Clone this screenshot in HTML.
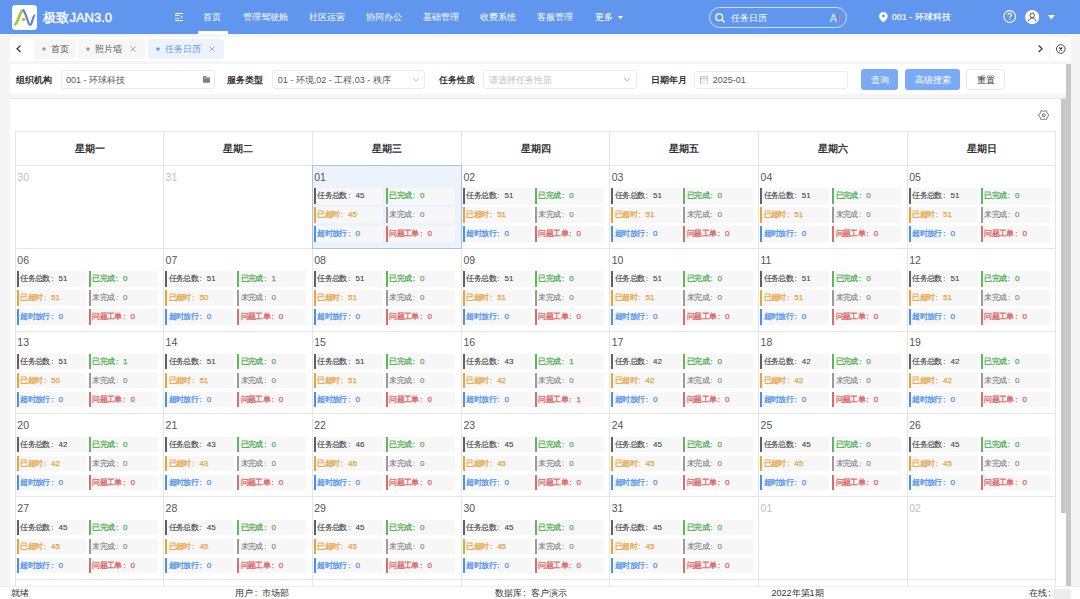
<!DOCTYPE html><html><head><meta charset="utf-8"><style>
*{box-sizing:border-box;margin:0;padding:0}
html,body{width:1080px;height:599px;overflow:hidden;background:#f5f5f5;font-family:"Liberation Sans",sans-serif;position:relative}
.a{position:absolute;white-space:nowrap}
#hdr{left:0;top:0;width:1080px;height:33.6px;background:#6096ee}
.nav{color:#fff;font-size:9px;line-height:10px;top:11.5px}
.panel{background:#fff}
.tab{top:39.2px;height:19.6px;border-radius:3.5px;background:#f6f6f6;font-size:9px;color:#555;line-height:21px}
.tab .dot{position:absolute;width:3.5px;height:3.5px;border-radius:50%;background:#999;top:8.3px}
.lbl{font-size:9px;font-weight:bold;color:#333;top:75px;line-height:10px}
.inp{top:70.4px;height:18.2px;border:1px solid #ebebeb;border-radius:3px;background:#fff;font-size:9px;color:#555;line-height:18px}
.btn{top:69.1px;height:20.6px;border-radius:3px;font-size:9px;line-height:22px;text-align:center}
table{position:absolute;left:15px;top:131px;border-collapse:collapse;table-layout:fixed}
td,th{border:1px solid #e5e5e5;vertical-align:top;position:relative}
th{height:34px;font-size:10px;font-weight:bold;color:#333;text-align:center;vertical-align:middle;padding-top:1px}
td{height:82.8px}
.dn{position:absolute;left:1.3px;top:4.8px;font-size:10.5px;color:#555;line-height:12px}
.dn.g{color:#c0c0c0}
.st{position:absolute;width:69.5px;height:15.4px;background:#f7f7f7;font-size:8px;line-height:15.4px;padding-left:3.6px;letter-spacing:-0.6px;-webkit-text-stroke:0.25px currentColor}
.st i{font-style:normal;display:inline-block;width:8.6px;padding-left:1.4px;letter-spacing:0}
.st b{font-weight:normal;font-size:8px;letter-spacing:0}
.st:before{content:"";position:absolute;left:0;top:0;width:2.2px;height:100%;background:currentColor}
.c0{color:#444;-webkit-text-stroke:0.12px #444}.c0:before{background:#606060}
.c1{color:#4fae4f}.c1:before{background:#5cb85c}
.c2{color:#e8a33d}.c2:before{background:#e8a33d}
.c3{color:#7d7d7d;-webkit-text-stroke:0.1px #7d7d7d}.c3 b{font-weight:normal}.c3:before{background:#9a9a9a}
.c4{color:#4a8ef0}.c4:before{background:#4a8ef0}
.c5{color:#dc5b5b}.c5:before{background:#dc6b6b}
.sel{background:#edf3fd}.sel:after{content:'';position:absolute;left:-1px;top:-1px;right:-0.5px;bottom:-1px;border:1px solid #a4c2f2}
.ft{top:587.8px;font-size:9px;color:#333;line-height:10px}
.cl{font-style:normal;display:inline-block;width:9px;padding-left:1.5px}
</style></head><body><div id="hdr" class="a"></div>
<div class="a" style="left:11.7px;top:5px;width:25.3px;height:25.3px;border-radius:3.5px;background:#fff"></div>
<svg class="a" style="left:11.7px;top:5px" width="25.3" height="25.3" viewBox="0 0 25.3 25.3">
<path d="M3.2 19.4 C5 17.8 6.2 14.5 7.5 10.5 C8.6 7.5 9.6 5.6 11.2 5.2" stroke="#a9c63a" stroke-width="2.7" fill="none" stroke-linecap="round"/>
<path d="M11.4 5.3 C13.2 7.2 14.8 13.5 16.4 17.6 C17.4 20.3 18.8 20.6 19.6 18.2 C20.3 16 20.8 12.4 22.3 10.6" stroke="#4f86db" stroke-width="2.1" fill="none" stroke-linecap="round"/>
<circle cx="11.6" cy="14.4" r="1.7" fill="#f0a02a"/>
</svg>
<div class="a" style="left:43.4px;top:11px;font-size:13px;line-height:14px;color:#fff;-webkit-text-stroke:0.35px #fff">极致JAN3.0</div>
<svg class="a" style="left:175px;top:12px" width="8.5" height="10" viewBox="0 0 8.5 10">
<rect x="0" y="1" width="8" height="1.05" fill="#fff"/><rect x="0" y="3" width="4.6" height="1" fill="#fff" opacity="0.9"/><rect x="0" y="5.9" width="4.6" height="1" fill="#fff" opacity="0.75"/><rect x="0" y="8" width="8" height="1.05" fill="#fff"/>
<ellipse cx="6.6" cy="4.9" rx="0.75" ry="1.15" fill="#fff"/></svg>
<div class="a nav" style="left:203.4px">首页</div>
<div class="a nav" style="left:242.5px">管理驾驶舱</div>
<div class="a nav" style="left:308.5px">社区运营</div>
<div class="a nav" style="left:366.1px">协同办公</div>
<div class="a nav" style="left:422.6px">基础管理</div>
<div class="a nav" style="left:480.20000000000005px">收费系统</div>
<div class="a nav" style="left:537.2px">客服管理</div>
<div class="a nav" style="left:595.0px">更多</div>
<svg class="a" style="left:618px;top:15.5px" width="5" height="3.4" viewBox="0 0 5 3.4"><path d="M0 0H5L2.5 3.4Z" fill="#fff"/></svg>
<div class="a" style="left:197.8px;top:31.1px;width:30px;height:2.5px;background:#fff"></div>
<div class="a" style="left:709.2px;top:7px;width:137.5px;height:20.5px;border:1px solid rgba(255,255,255,0.7);border-radius:10.5px"></div>
<svg class="a" style="left:715px;top:13px" width="10.5" height="9.5" viewBox="0 0 10.5 9.5"><circle cx="4.2" cy="4.2" r="3.4" stroke="#fff" stroke-width="1.2" fill="none"/><path d="M6.7 6.7 L9.3 9" stroke="#fff" stroke-width="1.3" stroke-linecap="round"/></svg>
<div class="a nav" style="left:731.4px;top:13.2px">任务日历</div>
<div class="a" style="left:829.8px;top:12.4px;font-size:11px;line-height:12px;color:#b0e4ff;-webkit-text-stroke:0.35px #b0e4ff">A<span style="color:#e2673f;-webkit-text-stroke:0.3px #e2673f;font-size:10px">i</span></div>
<svg class="a" style="left:879.4px;top:11.8px" width="8.7" height="10.5" viewBox="0 0 8.7 10.5"><path d="M4.35 0C2 0 0 1.9 0 4.2C0 6.8 4.35 10.5 4.35 10.5S8.7 6.8 8.7 4.2C8.7 1.9 6.7 0 4.35 0Z" fill="#fff"/><circle cx="4.35" cy="4.1" r="1.5" fill="#6096ee"/></svg>
<div class="a nav" style="left:891.8px;top:11.8px;-webkit-text-stroke:0.15px #fff">001 - 环球科技</div>
<svg class="a" style="left:1003px;top:10.3px" width="13.5" height="13" viewBox="0 0 13.5 13"><circle cx="6.7" cy="6.5" r="5.9" stroke="#fff" stroke-width="1.05" fill="none"/><path d="M4.9 5.1C4.9 3.9 5.7 3.3 6.7 3.3C7.7 3.3 8.5 4 8.5 4.9C8.5 6.1 6.8 6.2 6.8 7.7" stroke="#fff" stroke-width="1.05" fill="none"/><circle cx="6.8" cy="9.4" r="0.65" fill="#fff"/></svg>
<svg class="a" style="left:1025px;top:9.8px" width="14.4" height="14.2" viewBox="0 0 14.4 14.2"><circle cx="7.2" cy="7.1" r="7.1" fill="#fff"/><circle cx="7.2" cy="5.4" r="2.3" stroke="#444" stroke-width="0.9" fill="none"/><path d="M3.4 11.3C3.9 8.9 5.4 8 7.2 8C9 8 10.5 8.9 11 11.3" stroke="#444" stroke-width="0.9" fill="none"/></svg>
<svg class="a" style="left:1047.8px;top:15.3px" width="6.8" height="4.5" viewBox="0 0 6.8 4.5"><path d="M0 0H6.8L3.4 4.5Z" fill="#fff"/></svg>
<div class="a panel" style="left:10px;top:36.7px;width:1061px;height:24px"></div>
<svg class="a" style="left:16px;top:45.2px" width="5.5" height="7.5" viewBox="0 0 5.5 7.5"><path d="M4.6 0.5L1 3.75L4.6 7" stroke="#333" stroke-width="1.2" fill="none"/></svg>
<div class="a tab" style="left:34px;width:41.599999999999994px;background:#f6f6f6;color:#555"><svg style="position:absolute;left:7.6px;top:8px" width="4" height="4" viewBox="0 0 4 4"><circle cx="2" cy="2" r="1.75" fill="#999"/></svg><span style="position:absolute;left:16.5px">首页</span></div>
<div class="a tab" style="left:78.4px;width:66.5px;background:#f6f6f6;color:#555"><svg style="position:absolute;left:7.6px;top:8px" width="4" height="4" viewBox="0 0 4 4"><circle cx="2" cy="2" r="1.75" fill="#999"/></svg><span style="position:absolute;left:16.5px">照片墙</span><svg style="position:absolute;left:52.0px;top:7px" width="6" height="6" viewBox="0 0 6 6"><path d="M0.4 0.4L5.6 5.6M5.6 0.4L0.4 5.6" stroke="#9a9a9a" stroke-width="0.75"/></svg></div>
<div class="a tab" style="left:148.2px;width:75.60000000000002px;background:#ecf3fd;color:#5f95ee"><svg style="position:absolute;left:7.6px;top:8px" width="4" height="4" viewBox="0 0 4 4"><circle cx="2" cy="2" r="1.75" fill="#5f95ee"/></svg><span style="position:absolute;left:16.5px">任务日历</span><svg style="position:absolute;left:61.10000000000002px;top:7px" width="6" height="6" viewBox="0 0 6 6"><path d="M0.4 0.4L5.6 5.6M5.6 0.4L0.4 5.6" stroke="#9a9a9a" stroke-width="0.75"/></svg></div>
<div class="a" style="left:1049.3px;top:37px;width:0.8px;height:23.5px;background:#f2f2f2"></div>
<svg class="a" style="left:1037.6px;top:45px" width="5" height="7.5" viewBox="0 0 5 7.5"><path d="M0.6 0.5L4.2 3.75L0.6 7" stroke="#333" stroke-width="1.2" fill="none"/></svg>
<svg class="a" style="left:1055.5px;top:43.8px" width="10" height="10" viewBox="0 0 10 10"><circle cx="4.8" cy="5" r="4.3" stroke="#333" stroke-width="0.9" fill="none"/><path d="M3.3 3.5L6.3 6.5M6.3 3.5L3.3 6.5" stroke="#333" stroke-width="1.15"/></svg>
<div class="a panel" style="left:10px;top:64.1px;width:1056px;height:30.3px"></div>
<div class="a lbl" style="left:15.8px">组织机构</div>
<div class="a inp" style="left:60.5px;width:154px;padding-left:4.5px">001 - 环球科技</div>
<svg class="a" style="left:202.7px;top:76px" width="7.8" height="6.7" viewBox="0 0 7.8 6.7"><path d="M0 0.6Q0 0 0.6 0H2.8L3.5 0.9H7.2Q7.8 0.9 7.8 1.5V6.1Q7.8 6.7 7.2 6.7H0.6Q0 6.7 0 6.1Z" fill="#7c7c90"/><rect x="0.5" y="1.7" width="6.8" height="0.5" fill="#fff"/></svg>
<div class="a lbl" style="left:227px">服务类型</div>
<div class="a inp" style="left:272.2px;width:153px;padding-left:4.5px">01 - 环境,02 - 工程,03 - 秩序</div>
<svg class="a" style="left:413.2px;top:78.2px" width="6" height="3.6" viewBox="0 0 6 3.6"><path d="M0.3 0.3L3 3.1L5.7 0.3" stroke="#aaa" stroke-width="0.8" fill="none"/></svg>
<div class="a lbl" style="left:438.6px">任务性质</div>
<div class="a inp" style="left:483.3px;width:153.5px;padding-left:4.5px;color:#c0c0c0">请选择任务性质</div>
<svg class="a" style="left:624px;top:78.2px" width="6" height="3.6" viewBox="0 0 6 3.6"><path d="M0.3 0.3L3 3.1L5.7 0.3" stroke="#aaa" stroke-width="0.8" fill="none"/></svg>
<div class="a lbl" style="left:650.5px">日期年月</div>
<div class="a inp" style="left:694.4px;top:71px;height:17.5px;width:153.4px;padding-left:17.4px;line-height:17.5px">2025-01</div>
<svg class="a" style="left:699.6px;top:75.6px" width="8.4" height="8.6" viewBox="0 0 8.4 8.6"><rect x="0.45" y="0.75" width="7.5" height="7.4" rx="0.6" stroke="#a8a8a8" stroke-width="0.8" fill="none"/><path d="M0.45 2.7H7.95" stroke="#a8a8a8" stroke-width="0.8"/><path d="M2 4.8H3M3.7 4.8H4.7M5.4 4.8H6.4M2 6.4H3M3.7 6.4H4.7" stroke="#c4c4c4" stroke-width="0.6"/></svg>
<div class="a btn" style="left:861.1px;width:37.3px;background:#7baaf4;color:#fff">查询</div>
<div class="a btn" style="left:905.1px;width:55px;background:#7baaf4;color:#fff">高级搜索</div>
<div class="a btn" style="left:966.3px;width:38.8px;background:#fff;border:1px solid #e8e8e8;color:#333;line-height:20px">重置</div>
<div class="a panel" style="left:10px;top:97.8px;width:1056px;height:488.2px;border-top:1.1px solid #e6e6ea"></div>
<svg class="a" style="left:1037.8px;top:109.6px" width="11.4" height="10.6" viewBox="0 0 11.4 10.6"><path d="M10.80 5.30 L10.77 5.57 L10.67 5.82 L10.51 6.06 L10.32 6.28 L10.09 6.48 L9.87 6.65 L9.65 6.81 L9.45 6.97 L9.29 7.13 L9.16 7.30 L9.08 7.49 L9.02 7.71 L8.98 7.96 L8.96 8.23 L8.92 8.52 L8.86 8.81 L8.77 9.09 L8.64 9.34 L8.46 9.55 L8.25 9.72 L8.00 9.82 L7.73 9.86 L7.45 9.85 L7.16 9.79 L6.88 9.69 L6.61 9.58 L6.36 9.47 L6.13 9.38 L5.91 9.32 L5.70 9.30 L5.49 9.32 L5.27 9.38 L5.04 9.47 L4.79 9.58 L4.52 9.69 L4.24 9.79 L3.95 9.85 L3.67 9.86 L3.40 9.82 L3.15 9.72 L2.94 9.55 L2.76 9.34 L2.63 9.09 L2.54 8.81 L2.48 8.52 L2.44 8.23 L2.42 7.96 L2.38 7.71 L2.32 7.49 L2.24 7.30 L2.11 7.13 L1.95 6.97 L1.75 6.81 L1.53 6.65 L1.31 6.48 L1.08 6.28 L0.89 6.06 L0.73 5.82 L0.63 5.57 L0.60 5.30 L0.63 5.03 L0.73 4.78 L0.89 4.54 L1.08 4.32 L1.31 4.12 L1.53 3.95 L1.75 3.79 L1.95 3.63 L2.11 3.47 L2.24 3.30 L2.32 3.11 L2.38 2.89 L2.42 2.64 L2.44 2.37 L2.48 2.08 L2.54 1.79 L2.63 1.51 L2.76 1.26 L2.94 1.05 L3.15 0.88 L3.40 0.78 L3.67 0.74 L3.95 0.75 L4.24 0.81 L4.52 0.91 L4.79 1.02 L5.04 1.13 L5.27 1.22 L5.49 1.28 L5.70 1.30 L5.91 1.28 L6.13 1.22 L6.36 1.13 L6.61 1.02 L6.88 0.91 L7.16 0.81 L7.45 0.75 L7.73 0.74 L8.00 0.78 L8.25 0.88 L8.46 1.05 L8.64 1.26 L8.77 1.51 L8.86 1.79 L8.92 2.08 L8.96 2.37 L8.98 2.64 L9.02 2.89 L9.08 3.11 L9.16 3.30 L9.29 3.47 L9.45 3.63 L9.65 3.79 L9.87 3.95 L10.09 4.12 L10.32 4.32 L10.51 4.54 L10.67 4.78 L10.77 5.03 L10.80 5.30Z" stroke="#555" stroke-width="1" fill="none"/><circle cx="5.7" cy="5.3" r="1.5" stroke="#555" stroke-width="0.95" fill="none"/></svg>
<div class="a" style="left:1066px;top:64px;width:5px;height:522px;background:#c8c8c8"></div>
<div class="a" style="left:1061px;top:98.5px;width:5px;height:414px;background:#c8c8c8"></div>
<div class="a" style="left:0;top:0;width:1080px;height:586px;overflow:hidden"><table style="width:1040.5px"><colgroup><col style="width:148.3px"><col style="width:148.7px"><col style="width:149.1px"><col style="width:148.4px"><col style="width:148.8px"><col style="width:148.7px"><col style="width:148.5px"></colgroup><tr><th>星期一</th><th>星期二</th><th>星期三</th><th>星期四</th><th>星期五</th><th>星期六</th><th>星期日</th></tr><tr><td><div class="dn g">30</div></td><td><div class="dn g">31</div></td><td class="sel"><div class="dn ">01</div><div class="st c0" style="left:0.7px;top:22.4px">任务总数<i>:</i><b>45</b></div><div class="st c1" style="left:72.7px;top:22.4px">已完成<i>:</i><b>0</b></div><div class="st c2" style="left:0.7px;top:41.4px">已超时<i>:</i><b>45</b></div><div class="st c3" style="left:72.7px;top:41.4px">未完成<i>:</i><b>0</b></div><div class="st c4" style="left:0.7px;top:60.4px">超时放行<i>:</i><b>0</b></div><div class="st c5" style="left:72.7px;top:60.4px">问题工单<i>:</i><b>0</b></div></td><td><div class="dn ">02</div><div class="st c0" style="left:0.7px;top:22.4px">任务总数<i>:</i><b>51</b></div><div class="st c1" style="left:72.7px;top:22.4px">已完成<i>:</i><b>0</b></div><div class="st c2" style="left:0.7px;top:41.4px">已超时<i>:</i><b>51</b></div><div class="st c3" style="left:72.7px;top:41.4px">未完成<i>:</i><b>0</b></div><div class="st c4" style="left:0.7px;top:60.4px">超时放行<i>:</i><b>0</b></div><div class="st c5" style="left:72.7px;top:60.4px">问题工单<i>:</i><b>0</b></div></td><td><div class="dn ">03</div><div class="st c0" style="left:0.7px;top:22.4px">任务总数<i>:</i><b>51</b></div><div class="st c1" style="left:72.7px;top:22.4px">已完成<i>:</i><b>0</b></div><div class="st c2" style="left:0.7px;top:41.4px">已超时<i>:</i><b>51</b></div><div class="st c3" style="left:72.7px;top:41.4px">未完成<i>:</i><b>0</b></div><div class="st c4" style="left:0.7px;top:60.4px">超时放行<i>:</i><b>0</b></div><div class="st c5" style="left:72.7px;top:60.4px">问题工单<i>:</i><b>0</b></div></td><td><div class="dn ">04</div><div class="st c0" style="left:0.7px;top:22.4px">任务总数<i>:</i><b>51</b></div><div class="st c1" style="left:72.7px;top:22.4px">已完成<i>:</i><b>0</b></div><div class="st c2" style="left:0.7px;top:41.4px">已超时<i>:</i><b>51</b></div><div class="st c3" style="left:72.7px;top:41.4px">未完成<i>:</i><b>0</b></div><div class="st c4" style="left:0.7px;top:60.4px">超时放行<i>:</i><b>0</b></div><div class="st c5" style="left:72.7px;top:60.4px">问题工单<i>:</i><b>0</b></div></td><td><div class="dn ">05</div><div class="st c0" style="left:0.7px;top:22.4px">任务总数<i>:</i><b>51</b></div><div class="st c1" style="left:72.7px;top:22.4px">已完成<i>:</i><b>0</b></div><div class="st c2" style="left:0.7px;top:41.4px">已超时<i>:</i><b>51</b></div><div class="st c3" style="left:72.7px;top:41.4px">未完成<i>:</i><b>0</b></div><div class="st c4" style="left:0.7px;top:60.4px">超时放行<i>:</i><b>0</b></div><div class="st c5" style="left:72.7px;top:60.4px">问题工单<i>:</i><b>0</b></div></td></tr><tr><td><div class="dn ">06</div><div class="st c0" style="left:0.7px;top:22.4px">任务总数<i>:</i><b>51</b></div><div class="st c1" style="left:72.7px;top:22.4px">已完成<i>:</i><b>0</b></div><div class="st c2" style="left:0.7px;top:41.4px">已超时<i>:</i><b>51</b></div><div class="st c3" style="left:72.7px;top:41.4px">未完成<i>:</i><b>0</b></div><div class="st c4" style="left:0.7px;top:60.4px">超时放行<i>:</i><b>0</b></div><div class="st c5" style="left:72.7px;top:60.4px">问题工单<i>:</i><b>0</b></div></td><td><div class="dn ">07</div><div class="st c0" style="left:0.7px;top:22.4px">任务总数<i>:</i><b>51</b></div><div class="st c1" style="left:72.7px;top:22.4px">已完成<i>:</i><b>1</b></div><div class="st c2" style="left:0.7px;top:41.4px">已超时<i>:</i><b>50</b></div><div class="st c3" style="left:72.7px;top:41.4px">未完成<i>:</i><b>0</b></div><div class="st c4" style="left:0.7px;top:60.4px">超时放行<i>:</i><b>0</b></div><div class="st c5" style="left:72.7px;top:60.4px">问题工单<i>:</i><b>0</b></div></td><td><div class="dn ">08</div><div class="st c0" style="left:0.7px;top:22.4px">任务总数<i>:</i><b>51</b></div><div class="st c1" style="left:72.7px;top:22.4px">已完成<i>:</i><b>0</b></div><div class="st c2" style="left:0.7px;top:41.4px">已超时<i>:</i><b>51</b></div><div class="st c3" style="left:72.7px;top:41.4px">未完成<i>:</i><b>0</b></div><div class="st c4" style="left:0.7px;top:60.4px">超时放行<i>:</i><b>0</b></div><div class="st c5" style="left:72.7px;top:60.4px">问题工单<i>:</i><b>0</b></div></td><td><div class="dn ">09</div><div class="st c0" style="left:0.7px;top:22.4px">任务总数<i>:</i><b>51</b></div><div class="st c1" style="left:72.7px;top:22.4px">已完成<i>:</i><b>0</b></div><div class="st c2" style="left:0.7px;top:41.4px">已超时<i>:</i><b>51</b></div><div class="st c3" style="left:72.7px;top:41.4px">未完成<i>:</i><b>0</b></div><div class="st c4" style="left:0.7px;top:60.4px">超时放行<i>:</i><b>0</b></div><div class="st c5" style="left:72.7px;top:60.4px">问题工单<i>:</i><b>0</b></div></td><td><div class="dn ">10</div><div class="st c0" style="left:0.7px;top:22.4px">任务总数<i>:</i><b>51</b></div><div class="st c1" style="left:72.7px;top:22.4px">已完成<i>:</i><b>0</b></div><div class="st c2" style="left:0.7px;top:41.4px">已超时<i>:</i><b>51</b></div><div class="st c3" style="left:72.7px;top:41.4px">未完成<i>:</i><b>0</b></div><div class="st c4" style="left:0.7px;top:60.4px">超时放行<i>:</i><b>0</b></div><div class="st c5" style="left:72.7px;top:60.4px">问题工单<i>:</i><b>0</b></div></td><td><div class="dn ">11</div><div class="st c0" style="left:0.7px;top:22.4px">任务总数<i>:</i><b>51</b></div><div class="st c1" style="left:72.7px;top:22.4px">已完成<i>:</i><b>0</b></div><div class="st c2" style="left:0.7px;top:41.4px">已超时<i>:</i><b>51</b></div><div class="st c3" style="left:72.7px;top:41.4px">未完成<i>:</i><b>0</b></div><div class="st c4" style="left:0.7px;top:60.4px">超时放行<i>:</i><b>0</b></div><div class="st c5" style="left:72.7px;top:60.4px">问题工单<i>:</i><b>0</b></div></td><td><div class="dn ">12</div><div class="st c0" style="left:0.7px;top:22.4px">任务总数<i>:</i><b>51</b></div><div class="st c1" style="left:72.7px;top:22.4px">已完成<i>:</i><b>0</b></div><div class="st c2" style="left:0.7px;top:41.4px">已超时<i>:</i><b>51</b></div><div class="st c3" style="left:72.7px;top:41.4px">未完成<i>:</i><b>0</b></div><div class="st c4" style="left:0.7px;top:60.4px">超时放行<i>:</i><b>0</b></div><div class="st c5" style="left:72.7px;top:60.4px">问题工单<i>:</i><b>0</b></div></td></tr><tr><td><div class="dn ">13</div><div class="st c0" style="left:0.7px;top:22.4px">任务总数<i>:</i><b>51</b></div><div class="st c1" style="left:72.7px;top:22.4px">已完成<i>:</i><b>1</b></div><div class="st c2" style="left:0.7px;top:41.4px">已超时<i>:</i><b>50</b></div><div class="st c3" style="left:72.7px;top:41.4px">未完成<i>:</i><b>0</b></div><div class="st c4" style="left:0.7px;top:60.4px">超时放行<i>:</i><b>0</b></div><div class="st c5" style="left:72.7px;top:60.4px">问题工单<i>:</i><b>0</b></div></td><td><div class="dn ">14</div><div class="st c0" style="left:0.7px;top:22.4px">任务总数<i>:</i><b>51</b></div><div class="st c1" style="left:72.7px;top:22.4px">已完成<i>:</i><b>0</b></div><div class="st c2" style="left:0.7px;top:41.4px">已超时<i>:</i><b>51</b></div><div class="st c3" style="left:72.7px;top:41.4px">未完成<i>:</i><b>0</b></div><div class="st c4" style="left:0.7px;top:60.4px">超时放行<i>:</i><b>0</b></div><div class="st c5" style="left:72.7px;top:60.4px">问题工单<i>:</i><b>0</b></div></td><td><div class="dn ">15</div><div class="st c0" style="left:0.7px;top:22.4px">任务总数<i>:</i><b>51</b></div><div class="st c1" style="left:72.7px;top:22.4px">已完成<i>:</i><b>0</b></div><div class="st c2" style="left:0.7px;top:41.4px">已超时<i>:</i><b>51</b></div><div class="st c3" style="left:72.7px;top:41.4px">未完成<i>:</i><b>0</b></div><div class="st c4" style="left:0.7px;top:60.4px">超时放行<i>:</i><b>0</b></div><div class="st c5" style="left:72.7px;top:60.4px">问题工单<i>:</i><b>0</b></div></td><td><div class="dn ">16</div><div class="st c0" style="left:0.7px;top:22.4px">任务总数<i>:</i><b>43</b></div><div class="st c1" style="left:72.7px;top:22.4px">已完成<i>:</i><b>1</b></div><div class="st c2" style="left:0.7px;top:41.4px">已超时<i>:</i><b>42</b></div><div class="st c3" style="left:72.7px;top:41.4px">未完成<i>:</i><b>0</b></div><div class="st c4" style="left:0.7px;top:60.4px">超时放行<i>:</i><b>0</b></div><div class="st c5" style="left:72.7px;top:60.4px">问题工单<i>:</i><b>1</b></div></td><td><div class="dn ">17</div><div class="st c0" style="left:0.7px;top:22.4px">任务总数<i>:</i><b>42</b></div><div class="st c1" style="left:72.7px;top:22.4px">已完成<i>:</i><b>0</b></div><div class="st c2" style="left:0.7px;top:41.4px">已超时<i>:</i><b>42</b></div><div class="st c3" style="left:72.7px;top:41.4px">未完成<i>:</i><b>0</b></div><div class="st c4" style="left:0.7px;top:60.4px">超时放行<i>:</i><b>0</b></div><div class="st c5" style="left:72.7px;top:60.4px">问题工单<i>:</i><b>0</b></div></td><td><div class="dn ">18</div><div class="st c0" style="left:0.7px;top:22.4px">任务总数<i>:</i><b>42</b></div><div class="st c1" style="left:72.7px;top:22.4px">已完成<i>:</i><b>0</b></div><div class="st c2" style="left:0.7px;top:41.4px">已超时<i>:</i><b>42</b></div><div class="st c3" style="left:72.7px;top:41.4px">未完成<i>:</i><b>0</b></div><div class="st c4" style="left:0.7px;top:60.4px">超时放行<i>:</i><b>0</b></div><div class="st c5" style="left:72.7px;top:60.4px">问题工单<i>:</i><b>0</b></div></td><td><div class="dn ">19</div><div class="st c0" style="left:0.7px;top:22.4px">任务总数<i>:</i><b>42</b></div><div class="st c1" style="left:72.7px;top:22.4px">已完成<i>:</i><b>0</b></div><div class="st c2" style="left:0.7px;top:41.4px">已超时<i>:</i><b>42</b></div><div class="st c3" style="left:72.7px;top:41.4px">未完成<i>:</i><b>0</b></div><div class="st c4" style="left:0.7px;top:60.4px">超时放行<i>:</i><b>0</b></div><div class="st c5" style="left:72.7px;top:60.4px">问题工单<i>:</i><b>0</b></div></td></tr><tr><td><div class="dn ">20</div><div class="st c0" style="left:0.7px;top:22.4px">任务总数<i>:</i><b>42</b></div><div class="st c1" style="left:72.7px;top:22.4px">已完成<i>:</i><b>0</b></div><div class="st c2" style="left:0.7px;top:41.4px">已超时<i>:</i><b>42</b></div><div class="st c3" style="left:72.7px;top:41.4px">未完成<i>:</i><b>0</b></div><div class="st c4" style="left:0.7px;top:60.4px">超时放行<i>:</i><b>0</b></div><div class="st c5" style="left:72.7px;top:60.4px">问题工单<i>:</i><b>0</b></div></td><td><div class="dn ">21</div><div class="st c0" style="left:0.7px;top:22.4px">任务总数<i>:</i><b>43</b></div><div class="st c1" style="left:72.7px;top:22.4px">已完成<i>:</i><b>0</b></div><div class="st c2" style="left:0.7px;top:41.4px">已超时<i>:</i><b>43</b></div><div class="st c3" style="left:72.7px;top:41.4px">未完成<i>:</i><b>0</b></div><div class="st c4" style="left:0.7px;top:60.4px">超时放行<i>:</i><b>0</b></div><div class="st c5" style="left:72.7px;top:60.4px">问题工单<i>:</i><b>0</b></div></td><td><div class="dn ">22</div><div class="st c0" style="left:0.7px;top:22.4px">任务总数<i>:</i><b>46</b></div><div class="st c1" style="left:72.7px;top:22.4px">已完成<i>:</i><b>0</b></div><div class="st c2" style="left:0.7px;top:41.4px">已超时<i>:</i><b>46</b></div><div class="st c3" style="left:72.7px;top:41.4px">未完成<i>:</i><b>0</b></div><div class="st c4" style="left:0.7px;top:60.4px">超时放行<i>:</i><b>0</b></div><div class="st c5" style="left:72.7px;top:60.4px">问题工单<i>:</i><b>0</b></div></td><td><div class="dn ">23</div><div class="st c0" style="left:0.7px;top:22.4px">任务总数<i>:</i><b>45</b></div><div class="st c1" style="left:72.7px;top:22.4px">已完成<i>:</i><b>0</b></div><div class="st c2" style="left:0.7px;top:41.4px">已超时<i>:</i><b>45</b></div><div class="st c3" style="left:72.7px;top:41.4px">未完成<i>:</i><b>0</b></div><div class="st c4" style="left:0.7px;top:60.4px">超时放行<i>:</i><b>0</b></div><div class="st c5" style="left:72.7px;top:60.4px">问题工单<i>:</i><b>0</b></div></td><td><div class="dn ">24</div><div class="st c0" style="left:0.7px;top:22.4px">任务总数<i>:</i><b>45</b></div><div class="st c1" style="left:72.7px;top:22.4px">已完成<i>:</i><b>0</b></div><div class="st c2" style="left:0.7px;top:41.4px">已超时<i>:</i><b>45</b></div><div class="st c3" style="left:72.7px;top:41.4px">未完成<i>:</i><b>0</b></div><div class="st c4" style="left:0.7px;top:60.4px">超时放行<i>:</i><b>0</b></div><div class="st c5" style="left:72.7px;top:60.4px">问题工单<i>:</i><b>0</b></div></td><td><div class="dn ">25</div><div class="st c0" style="left:0.7px;top:22.4px">任务总数<i>:</i><b>45</b></div><div class="st c1" style="left:72.7px;top:22.4px">已完成<i>:</i><b>0</b></div><div class="st c2" style="left:0.7px;top:41.4px">已超时<i>:</i><b>45</b></div><div class="st c3" style="left:72.7px;top:41.4px">未完成<i>:</i><b>0</b></div><div class="st c4" style="left:0.7px;top:60.4px">超时放行<i>:</i><b>0</b></div><div class="st c5" style="left:72.7px;top:60.4px">问题工单<i>:</i><b>0</b></div></td><td><div class="dn ">26</div><div class="st c0" style="left:0.7px;top:22.4px">任务总数<i>:</i><b>45</b></div><div class="st c1" style="left:72.7px;top:22.4px">已完成<i>:</i><b>0</b></div><div class="st c2" style="left:0.7px;top:41.4px">已超时<i>:</i><b>45</b></div><div class="st c3" style="left:72.7px;top:41.4px">未完成<i>:</i><b>0</b></div><div class="st c4" style="left:0.7px;top:60.4px">超时放行<i>:</i><b>0</b></div><div class="st c5" style="left:72.7px;top:60.4px">问题工单<i>:</i><b>0</b></div></td></tr><tr><td><div class="dn ">27</div><div class="st c0" style="left:0.7px;top:22.4px">任务总数<i>:</i><b>45</b></div><div class="st c1" style="left:72.7px;top:22.4px">已完成<i>:</i><b>0</b></div><div class="st c2" style="left:0.7px;top:41.4px">已超时<i>:</i><b>45</b></div><div class="st c3" style="left:72.7px;top:41.4px">未完成<i>:</i><b>0</b></div><div class="st c4" style="left:0.7px;top:60.4px">超时放行<i>:</i><b>0</b></div><div class="st c5" style="left:72.7px;top:60.4px">问题工单<i>:</i><b>0</b></div></td><td><div class="dn ">28</div><div class="st c0" style="left:0.7px;top:22.4px">任务总数<i>:</i><b>45</b></div><div class="st c1" style="left:72.7px;top:22.4px">已完成<i>:</i><b>0</b></div><div class="st c2" style="left:0.7px;top:41.4px">已超时<i>:</i><b>45</b></div><div class="st c3" style="left:72.7px;top:41.4px">未完成<i>:</i><b>0</b></div><div class="st c4" style="left:0.7px;top:60.4px">超时放行<i>:</i><b>0</b></div><div class="st c5" style="left:72.7px;top:60.4px">问题工单<i>:</i><b>0</b></div></td><td><div class="dn ">29</div><div class="st c0" style="left:0.7px;top:22.4px">任务总数<i>:</i><b>45</b></div><div class="st c1" style="left:72.7px;top:22.4px">已完成<i>:</i><b>0</b></div><div class="st c2" style="left:0.7px;top:41.4px">已超时<i>:</i><b>45</b></div><div class="st c3" style="left:72.7px;top:41.4px">未完成<i>:</i><b>0</b></div><div class="st c4" style="left:0.7px;top:60.4px">超时放行<i>:</i><b>0</b></div><div class="st c5" style="left:72.7px;top:60.4px">问题工单<i>:</i><b>0</b></div></td><td><div class="dn ">30</div><div class="st c0" style="left:0.7px;top:22.4px">任务总数<i>:</i><b>45</b></div><div class="st c1" style="left:72.7px;top:22.4px">已完成<i>:</i><b>0</b></div><div class="st c2" style="left:0.7px;top:41.4px">已超时<i>:</i><b>45</b></div><div class="st c3" style="left:72.7px;top:41.4px">未完成<i>:</i><b>0</b></div><div class="st c4" style="left:0.7px;top:60.4px">超时放行<i>:</i><b>0</b></div><div class="st c5" style="left:72.7px;top:60.4px">问题工单<i>:</i><b>0</b></div></td><td><div class="dn ">31</div><div class="st c0" style="left:0.7px;top:22.4px">任务总数<i>:</i><b>45</b></div><div class="st c1" style="left:72.7px;top:22.4px">已完成<i>:</i><b>0</b></div><div class="st c2" style="left:0.7px;top:41.4px">已超时<i>:</i><b>45</b></div><div class="st c3" style="left:72.7px;top:41.4px">未完成<i>:</i><b>0</b></div><div class="st c4" style="left:0.7px;top:60.4px">超时放行<i>:</i><b>0</b></div><div class="st c5" style="left:72.7px;top:60.4px">问题工单<i>:</i><b>0</b></div></td><td><div class="dn g">01</div></td><td><div class="dn g">02</div></td></tr><tr><td></td><td></td><td></td><td></td><td></td><td></td><td></td></tr></table></div>
<div class="a" style="left:0;top:586px;width:1080px;height:13px;background:#fff;border-top:1px solid #efeff1"></div>
<div class="a ft" style="left:10.8px">就绪</div>
<div class="a ft" style="left:235.3px">用户<i class="cl">:</i>市场部</div>
<div class="a ft" style="left:494.7px">数据库<i class="cl">:</i>客户演示</div>
<div class="a ft" style="left:771.5px">2022年第1期</div>
<div class="a ft" style="left:1028.8px">在线<i class="cl">:</i></div>
<div class="a" style="left:1053px;top:588.5px;width:18px;height:10.5px;background:#ececec;border-radius:2px;filter:blur(0.6px)"></div></body></html>
